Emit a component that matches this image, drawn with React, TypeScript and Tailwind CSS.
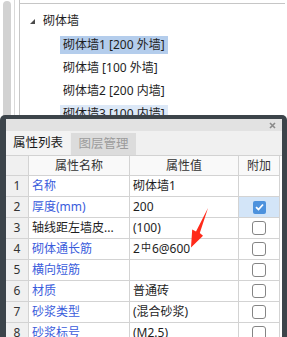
import React from "react"

const font = { fontFamily: '"Noto Sans", "Noto Sans CJK SC", sans-serif' }

type Row = {
  no: number
  name: string
  link: boolean
  value: React.ReactNode
  box: "none" | "on" | "off"
}

const rows: Row[] = [
  { no: 1, name: "名称", link: true, value: "砌体墙1", box: "none" },
  { no: 2, name: "厚度(mm)", link: true, value: "200", box: "on" },
  { no: 3, name: "轴线距左墙皮...", link: false, value: "(100)", box: "off" },
  {
    no: 4,
    name: "砌体通长筋",
    link: true,
    value: (
      <>
        2<span className="text-[10px] relative -top-[2px] mx-px">中</span>6@600
      </>
    ),
    box: "off",
  },
  { no: 5, name: "横向短筋", link: true, value: "", box: "off" },
  { no: 6, name: "材质", link: true, value: "普通砖", box: "off" },
  { no: 7, name: "砂浆类型", link: true, value: "(混合砂浆)", box: "off" },
  { no: 8, name: "砂浆标号", link: true, value: "(M2.5)", box: "off" },
]

function TreeItem({ label, tone }: { label: string; tone?: "sel" | "soft" }) {
  const bg = tone === "sel" ? "bg-[#b4cdec]" : tone === "soft" ? "bg-[#dce8f7]" : ""
  return (
    <div className="h-[23px] flex items-center">
      <span className={`ml-[40px] h-[18px] px-[3px] flex items-center ${bg}`}>{label}</span>
    </div>
  )
}

function Checkbox({ state }: { state: Row["box"] }) {
  if (state === "none") return null
  if (state === "on")
    return (
      <span className="w-[13px] h-[13px] rounded-[2px] bg-[#4d92dd] flex items-center justify-center">
        <svg width="9" height="8" viewBox="0 0 9 8">
          <path d="M1 4.2 L3.5 6.5 L8 1.5" fill="none" stroke="#fff" strokeWidth="1.8" />
        </svg>
      </span>
    )
  return <span className="w-[14px] h-[14px] rounded-[3px] border border-[#858585] bg-white" />
}

export default function App() {
  return (
    <div className="relative w-[287px] h-[337px] overflow-hidden bg-white text-[12px] text-[#1e1e1e] flex flex-col" style={font}>
      {/* tree area */}
      <div className="h-[115px] flex shrink-0">
        <div className="w-[3px]" />
        <div className="w-[8px] mt-[1px] bg-[#d2d2d2] rounded-t-[4px]" />
        <div className="w-[3px]" />
        <div className="w-px bg-[#d9d9d9]" />
        <div className="w-[4px]" />
        <div className="w-px bg-[#c6c6c6]" />
        <div className="flex-1 mr-[2px] mt-[3px] border-t border-[#c6c6c6] pt-[5px]">
          <div className="h-[24px] flex items-center">
            <svg width="5" height="5" viewBox="0 0 5 5" className="ml-[10px]">
              <polygon points="5,0 5,5 0,5" fill="#4a4a4a" />
            </svg>
            <span className="ml-[8px]">砌体墙</span>
          </div>
          <TreeItem label="砌体墙1 [200 外墙]" tone="sel" />
          <TreeItem label="砌体墙 [100 外墙]" />
          <TreeItem label="砌体墙2 [200 内墙]" />
          <TreeItem label="砌体墙3 [100 内墙]" tone="soft" />
        </div>
      </div>

      {/* property panel */}
      <div className="flex-1 bg-[#3c444a] rounded-t-[5px] pt-[4px] pl-[6px] pr-[5px]">
        <div className="h-full bg-white flex flex-col">
          <div className="h-[12px] bg-[#e2e2e2] flex items-center justify-end pr-[6px]">
            <svg width="7" height="7" viewBox="0 0 7 7">
              <path d="M1 1 L6 6 M6 1 L1 6" stroke="#8a8a8a" strokeWidth="1.6" />
            </svg>
          </div>
          <div className="h-[25px] bg-[#f0f0f0] border-b border-[#d2d2d2] flex">
            <div className="w-[64px] flex items-center justify-center bg-[#f3f3f3] text-[#1a1a1a] text-[12.5px]">
              属性列表
            </div>
            <div className="w-[65px] mt-[2px] ml-px flex items-center justify-center bg-[#dcdcdc] text-[#9b9b9b] text-[12.5px]">
              图层管理
            </div>
          </div>

          <div className="grid grid-cols-[23px_101px_109px_41px]">
            <div className="h-[20px] bg-[#f0f0f0] border-r border-b border-[#d3d3d3]" />
            <div className="h-[20px] bg-[#f9f9f9] border-r border-b border-[#d3d3d3] flex items-center justify-center text-[#333]">
              属性名称
            </div>
            <div className="h-[20px] bg-[#f9f9f9] border-r border-b border-[#d3d3d3] flex items-center justify-center text-[#333]">
              属性值
            </div>
            <div className="h-[20px] bg-[#f9f9f9] border-r border-b border-[#d3d3d3] flex items-center justify-center text-[#333]">
              附加
            </div>

            {rows.map((r) => (
              <React.Fragment key={r.no}>
                <div className="h-[21px] bg-[#f0f0f0] border-r border-b border-[#d3d3d3] flex items-center justify-center text-[#333]">
                  {r.no}
                </div>
                <div
                  className={`h-[21px] border-r border-b border-[#d3d3d3] flex items-center pl-[3px] whitespace-nowrap overflow-hidden ${
                    r.link ? "text-[#3a5cdc]" : "text-[#1e1e1e]"
                  }`}
                >
                  {r.name}
                </div>
                <div className="h-[21px] border-r border-b border-[#d3d3d3] flex items-center pl-[3px] whitespace-nowrap">
                  {r.value}
                </div>
                <div
                  className={`h-[21px] border-r border-b border-[#d3d3d3] flex items-center justify-center ${
                    r.box === "on" ? "bg-[#d3e5f8]" : ""
                  }`}
                >
                  <Checkbox state={r.box} />
                </div>
              </React.Fragment>
            ))}
          </div>
        </div>
      </div>

      {/* red annotation arrow */}
      <svg className="absolute left-[185px] top-[204px]" width="28" height="46" viewBox="0 0 28 46">
        <polygon points="23,4 14.8,29 18,31.8 6,43.5 7.2,25.6 11,27.4" fill="#ff2a1a" />
      </svg>
    </div>
  )
}
